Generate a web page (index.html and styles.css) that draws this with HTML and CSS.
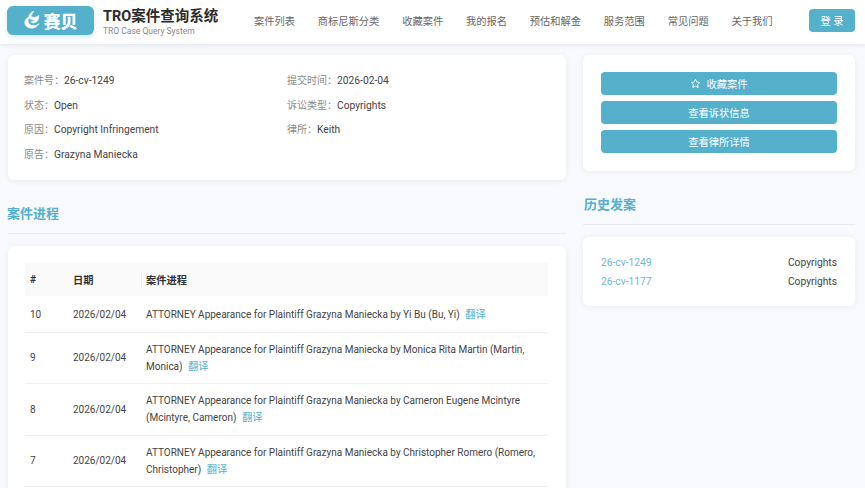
FILE: index.html
```html
<!DOCTYPE html>
<html lang="zh-CN">
<head>
<meta charset="utf-8">
<title>TRO案件查询系统</title>
<link rel="stylesheet" href="styles.css">
</head>
<body>
<header class="topbar">
  <div class="logo">
    <svg class="logo-mark" viewBox="2 1 18 20" width="16" height="18" aria-hidden="true">
      <path d="M13 1 C9 3 7.500 5 7.500 7.500 C4.500 9 2 12 3 15.500 C4.500 19.500 10 21.500 14 19.500 C16.500 18.500 18 17 19 15 C16 17.500 11 18 8 15.500 C6 13.500 6 10.500 8 9 C9.500 10.500 11.500 11.500 14 11 C12.500 12.500 11 13 9.500 13 C11.500 15 15 14.500 17 12 C18.500 10 19 8 18.500 6 C15.500 8.500 12 8.500 10 7 C10.500 5 11.500 3 13 1 Z" fill="#fff" stroke="#fff" stroke-width=".6" stroke-linejoin="round"/>
    </svg>
    <span class="logo-text">赛贝</span>
  </div>
  <div class="brand">
    <div class="brand-title">TRO案件查询系统</div>
    <div class="brand-sub">TRO Case Query System</div>
  </div>
  <nav class="nav">
    <a class="nav-item">案件列表</a>
    <a class="nav-item">商标尼斯分类</a>
    <a class="nav-item">收藏案件</a>
    <a class="nav-item">我的报名</a>
    <a class="nav-item">预估和解金</a>
    <a class="nav-item">服务范围</a>
    <a class="nav-item">常见问题</a>
    <a class="nav-item">关于我们</a>
  </nav>
  <button class="login">登 录</button>
</header>

<main class="layout">
  <section class="main-col">
    <div class="card info-card">
      <div class="info-grid">
        <div class="info-row"><span class="lbl">案件号：</span>26-cv-1249</div>
        <div class="info-row"><span class="lbl">提交时间：</span>2026-02-04</div>
        <div class="info-row"><span class="lbl">状态：</span>Open</div>
        <div class="info-row"><span class="lbl">诉讼类型：</span>Copyrights</div>
        <div class="info-row"><span class="lbl">原因：</span>Copyright Infringement</div>
        <div class="info-row"><span class="lbl">律所：</span>Keith</div>
        <div class="info-row"><span class="lbl">原告：</span>Grazyna Maniecka</div>
      </div>
    </div>

    <h2 class="section-title main-title">案件进程</h2>

    <div class="card table-card">
      <table class="docket">
        <thead>
          <tr><th class="c-num">#</th><th class="c-date">日期</th><th class="c-text">案件进程</th></tr>
        </thead>
        <tbody>
          <tr class="row-single"><td>10</td><td>2026/02/04</td><td>ATTORNEY Appearance for Plaintiff Grazyna Maniecka by Yi Bu (Bu, Yi) <a class="tr">翻译</a></td></tr>
          <tr><td>9</td><td>2026/02/04</td><td>ATTORNEY Appearance for Plaintiff Grazyna Maniecka by Monica Rita Martin (Martin, Monica) <a class="tr">翻译</a></td></tr>
          <tr><td>8</td><td>2026/02/04</td><td>ATTORNEY Appearance for Plaintiff Grazyna Maniecka by Cameron Eugene Mcintyre<br>(Mcintyre, Cameron) <a class="tr">翻译</a></td></tr>
          <tr><td>7</td><td>2026/02/04</td><td>ATTORNEY Appearance for Plaintiff Grazyna Maniecka by Christopher Romero (Romero, Christopher) <a class="tr">翻译</a></td></tr>
        </tbody>
      </table>
    </div>
  </section>

  <aside class="side-col">
    <div class="card action-card">
      <button class="action">
        <svg class="star" viewBox="0 0 24 24" width="11" height="11" aria-hidden="true"><path d="M12 2.800 L14.800 8.900 L21.500 9.700 L16.500 14.200 L17.900 20.800 L12 17.500 L6.100 20.800 L7.500 14.200 L2.500 9.700 L9.200 8.900 Z" fill="none" stroke="#fff" stroke-width="2" stroke-linejoin="round"/></svg>
        收藏案件
      </button>
      <button class="action">查看诉状信息</button>
      <button class="action">查看律所详情</button>
    </div>

    <h2 class="section-title side-title">历史发案</h2>

    <div class="card history-card">
      <div class="history-row"><a class="case-link">26-cv-1249</a><span>Copyrights</span></div>
      <div class="history-row"><a class="case-link">26-cv-1177</a><span>Copyrights</span></div>
    </div>
  </aside>
</main>
</body>
</html>
```

FILE: styles.css
```css
* { box-sizing: border-box; }
html, body { margin: 0; height: 488px; overflow: hidden; }
body {
  background: #f7f9fc;
  color: #3a3a3a;
  font-family: Roboto, "Noto Sans CJK SC", sans-serif;
  font-size: 10.250px;
}
.topbar {
  height: 44px;
  background: #fff;
  box-shadow: 0 1px 5px rgba(0, 0, 0, .09);
  display: flex;
  align-items: center;
  padding: 0 10px 0 7px;
  position: relative;
}
.logo {
  width: 87px;
  height: 29px;
  margin-top: -4px;
  background: #55b0cc;
  border-radius: 6px;
  box-shadow: 0 2px 5px rgba(85, 176, 204, .25);
  display: flex;
  align-items: center;
  justify-content: center;
  gap: 4px;
  color: #fff;
}
.logo-mark { flex: none; }
.logo-text { font-size: 17px; font-weight: 900; line-height: 1; font-family: "Noto Sans CJK SC", sans-serif; }
.brand { margin-left: 9px; width: 141px; margin-top: -1px; }
.brand-title { font-size: 14.500px; font-weight: 700; color: #2b2b2b; line-height: 19px; white-space: nowrap; }
.brand-sub { font-size: 8.500px; color: #8a8a8a; line-height: 10px; white-space: nowrap; }
.nav { display: flex; gap: 22.800px; margin-left: 10px; flex: 1; }
.nav-item { font-size: 10.250px; color: #666; white-space: nowrap; line-height: 14px; }
.login {
  width: 46px;
  height: 23px;
  margin-top: -4px;
  border: 0;
  border-radius: 4px;
  background: #55b0cc;
  color: #fff;
  font: inherit;
  padding: 0;
}
.layout {
  display: flex;
  gap: 17px;
  padding: 11px 10px 0 8px;
  align-items: flex-start;
}
.main-col { width: 558px; flex: none; }
.side-col { width: 272px; flex: none; }
.card {
  background: #fff;
  border-radius: 6px;
  box-shadow: 0 1px 6px rgba(0, 0, 0, .06);
}
.info-card { height: 125px; padding: 16px 16px; }
.info-grid { display: grid; grid-template-columns: 263px 1fr; grid-auto-rows: 24.700px; }
.info-row { line-height: 20px; color: #444; white-space: nowrap; }
.lbl { color: #8a8a8a; font-size: 10px; }
.section-title {
  margin: 0;
  font-size: 13px;
  font-weight: 700;
  color: #55b0cc;
  line-height: 20px;
  border-bottom: 1px solid #e8ecef;
}
.main-title { margin-top: 24px; padding-bottom: 9px; text-indent: -1px; }
.side-title { margin-top: 24px; padding-bottom: 9px; text-indent: 1px; }
.table-card { margin-top: 12px; padding: 17px 18px 0 17px; height: 260px; }
.docket { width: 100%; border-collapse: collapse; table-layout: fixed; font-size: 10px; }
.docket th {
  background: #fafafa;
  height: 33px;
  padding: 0 5px;
  text-align: left;
  font-weight: 700;
  color: #333;
  font-size: 10.250px;
  position: relative;
}
.c-num { width: 43px; }
.c-date { width: 73px; }
.docket th.c-text::before {
  content: "";
  position: absolute;
  left: 0;
  top: 9px;
  bottom: 9px;
  width: 1px;
  background: #ececec;
}
.docket td {
  padding: 0 5px;
  height: 51.500px;
  line-height: 17px;
  border-bottom: 1px solid #f0f0f0;
  color: #444;
}
.docket .row-single td { height: 36px; padding-top: 1px; }
.tr { color: #55b0cc; margin-left: 3px; font-size: 10.250px; }
.action-card { height: 116px; padding: 17px 18px; display: flex; flex-direction: column; gap: 6px; }
.action {
  height: 23px;
  border: 0;
  border-radius: 4px;
  background: #55b0cc;
  color: #fff;
  font: inherit;
  padding: 0;
  display: flex;
  align-items: center;
  justify-content: center;
  gap: 5px;
}
.star { flex: none; }
.history-card { margin-top: 12px; height: 69px; padding: 16px 18px; }
.history-row { display: flex; justify-content: space-between; line-height: 19px; color: #444; }
.case-link { color: #6fb6cf; }
```
